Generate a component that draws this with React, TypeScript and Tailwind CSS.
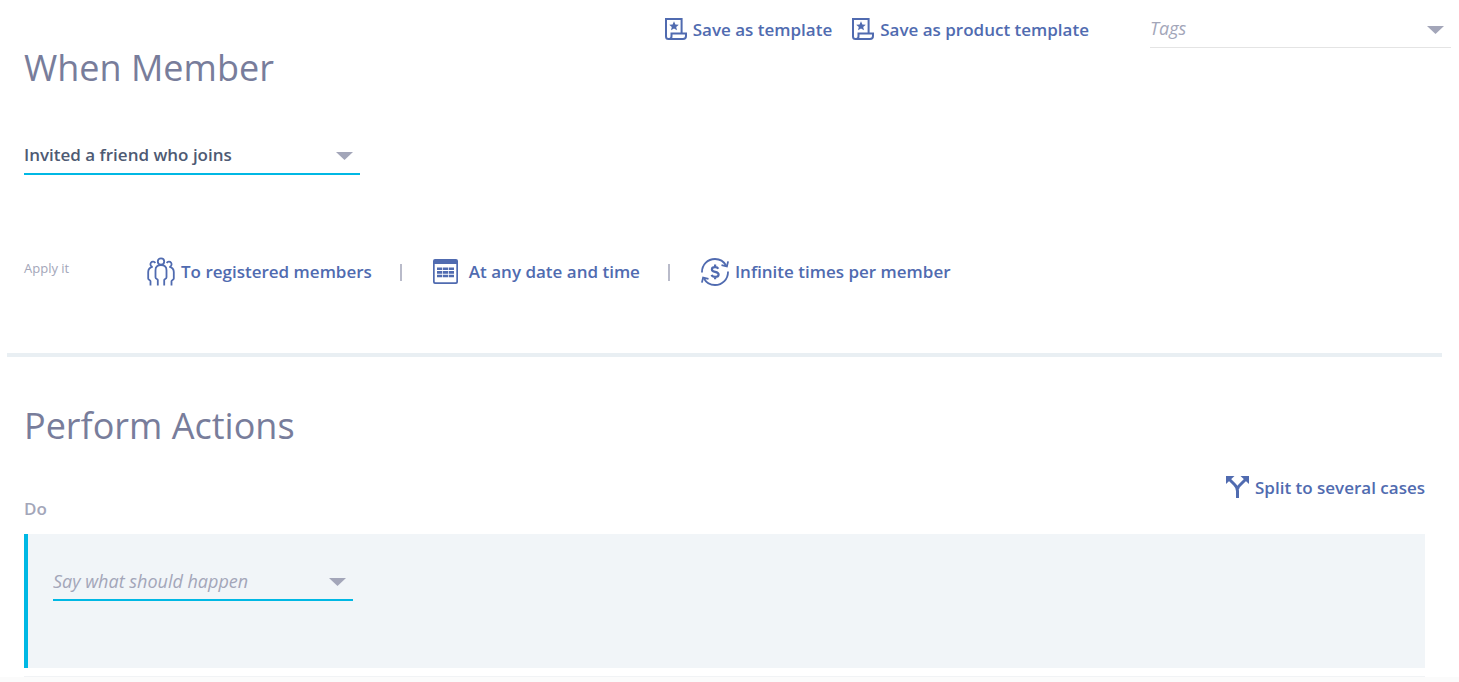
import type { ReactNode } from "react";

export default function App() {
  return (
    <div className="min-h-screen bg-white font-['Open_Sans','Noto_Sans',sans-serif] text-[17px] text-[#4e5a73]">
      <header className="flex h-12 items-start justify-end pr-2">
        <div className="flex gap-5 pt-[15px]">
          <ActionButton icon={<TemplateIcon />} label="Save as template" />
          <ActionButton icon={<TemplateIcon />} label="Save as product template" />
        </div>
        <Dropdown
          label="Tags"
          options={["Tags"]}
          className="ml-[61px] h-12 w-[301px]"
          selectClassName="border-b border-[#e4e4e4] pt-2 pb-0 text-lg italic text-[#a3a6b9]"
          arrowClassName="top-[26px]"
        />
      </header>

      <main>
        <section className="pl-6 pr-[34px]">
          <h1 className="text-4xl leading-10 text-[#787d9b]">When Member</h1>
          <Dropdown
            label="Trigger"
            options={["Invited a friend who joins"]}
            className="mt-[47px] h-10 w-[336px]"
            selectClassName="border-b-2 border-[#00b8e4] pt-px font-semibold text-[#4e5a73]"
            arrowClassName="top-[17px]"
          />

          <div className="mt-[82px] flex h-[30px] items-center">
            <span className="w-[123px] pb-[6px] text-[13px] text-[#a3a6b9]">Apply it</span>
            <ActionButton icon={<MembersIcon />} label="To registered members" />
            <Separator />
            <ActionButton icon={<CalendarIcon />} label="At any date and time" gap="gap-[11px]" />
            <Separator />
            <ActionButton icon={<RepeatIcon />} label="Infinite times per member" />
          </div>
        </section>

        <hr className="ml-[7px] mr-[17px] mt-[66px] border-t-4 border-[#e9eff3]" />

        <section className="mt-[49px] pl-6 pr-[34px]">
          <h2 className="text-4xl leading-10 text-[#787d9b]">Perform Actions</h2>
          <div className="mt-[27px] flex items-start justify-between">
            <h3 className="pt-6 font-semibold leading-6 text-[#a3a6b9]">Do</h3>
            <ActionButton icon={<SplitIcon />} label="Split to several cases" />
          </div>
          <div className="mt-[13px] border-l-4 border-[#00b8e4] bg-[#f1f5f8] pb-[67px] pl-[25px] pt-[27px]">
            <Dropdown
              label="Action"
              options={["Say what should happen"]}
              className="h-10 w-[300px]"
              selectClassName="border-b-2 border-[#00b8e4] pt-px text-lg italic text-[#a3a6b9]"
              arrowClassName="top-[17px]"
            />
          </div>
          <div className="mt-2 border-t border-[#f1f3f5]" />
        </section>
      </main>
      <footer className="h-[5px] bg-[#fbfbfb]" />
    </div>
  );
}

function ActionButton({ icon, label, gap = "gap-[6px]" }: { icon: ReactNode; label: string; gap?: string }) {
  return (
    <button type="button" className={`flex items-center whitespace-nowrap font-semibold leading-[30px] text-[#506bb0] ${gap}`}>
      {icon}
      {label}
    </button>
  );
}

function Separator() {
  return <span className="ml-7 mr-[31px] h-[17px] w-0.5 bg-[#b9bbca]" />;
}

function Dropdown({
  label,
  options,
  className,
  selectClassName,
  arrowClassName,
}: {
  label: string;
  options: string[];
  className: string;
  selectClassName: string;
  arrowClassName: string;
}) {
  return (
    <div className={`relative ${className}`}>
      <select
        aria-label={label}
        className={`h-full w-full appearance-none rounded-none bg-transparent outline-none ${selectClassName}`}
      >
        {options.map((o) => (
          <option key={o}>{o}</option>
        ))}
      </select>
      <svg
        className={`pointer-events-none absolute right-[7px] h-2 w-[17px] ${arrowClassName}`}
        viewBox="0 0 17 8"
        fill="#a3a6b9"
      >
        <path d="M0 0h17L8.500 8z" />
      </svg>
    </div>
  );
}

function TemplateIcon() {
  return (
    <svg className="h-6 w-[22px]" viewBox="0 0 22 24" fill="none" stroke="currentColor" strokeWidth="2">
      <path d="M16.600 15V1H1v17.500C1 20 2 21 3.500 21H18c2 0 3-1.500 3-3v-2.500H6.500v2.700c0 1.600-1 2.800-2.300 2.800" />
      <path d="M9 3.300l1.400 3.100 3.400.3-2.600 2.200.8 3.300L9 10.500 6 12.200l.8-3.300-2.600-2.200 3.400-.3z" fill="currentColor" stroke="none" />
    </svg>
  );
}

function MembersIcon() {
  return (
    <svg className="h-[30px] w-7" viewBox="0 0 28 30" fill="none" stroke="currentColor" strokeWidth="1.800">
      <circle cx="14" cy="4.500" r="3.200" />
      <path d="M10.800 28.500v-5.500c0-1.200-2.300-1-2.300-2.800v-7c0-3.200 2-5 5.500-5s5.500 1.800 5.500 5v7c0 1.800-2.300 1.600-2.300 2.800v5.500" />
      <path d="M8.300 6A2.600 2.600 0 1 0 5.600 9.800C2.500 10.500 1.200 12.200 1.200 15v6.500c0 1.600 2.300 1.500 2.300 2.800v4.200M19.700 6a2.600 2.600 0 1 1 2.700 3.800C25.500 10.500 26.800 12.200 26.800 15v6.500c0 1.600-2.300 1.500-2.300 2.800v4.200" />
    </svg>
  );
}

function CalendarIcon() {
  return (
    <svg className="h-[26px] w-[25px]" viewBox="0 0 25 26" fill="currentColor">
      <path
        fillRule="evenodd"
        d="M2 0h21a2 2 0 0 1 2 2v21a2 2 0 0 1-2 2H2a2 2 0 0 1-2-2V2a2 2 0 0 1 2-2zM1.700 5V22.500c0 .5.300.800.800.800h20c.5 0 .8-.3.800-.8V5z"
      />
      <path d="M4 8.500h5.300v2.600H4zM10 8.500h5.300v2.600H10zM16 8.500h5v2.600h-5zM4 12.100h5.300v2.600H4zM10 12.100h5.300v2.600H10zM16 12.100h5v2.600h-5zM4 15.700h5.300v2.600H4zM10 15.700h5.300v2.600H10zM16 15.700h5v2.600h-5z" />
    </svg>
  );
}

function RepeatIcon() {
  return (
    <svg className="h-7 w-7" viewBox="0 0 28 28" fill="none" stroke="currentColor" strokeWidth="1.800">
      <path d="M1 14.500C.8 7 6.500 1 14 1c4.800 0 8.800 2.300 11 6.500M27 13.500C27.200 21 21.500 27 14 27c-4.800 0-8.800-2.300-11-6.500" />
      <path d="M20.500 7.200l5.400 1.200 1.200-5M7.500 20.800l-5.400-1.200-1.200 5" />
      <path d="M17.300 10.800c-.5-1-1.700-1.600-3.200-1.600-1.900 0-3.200.9-3.200 2.200 0 3.300 6.700 1.700 6.700 5 0 1.500-1.400 2.400-3.400 2.400-1.800 0-3.100-.6-3.600-1.900M14.100 6.600v2.600M14.100 18.700v2.600" strokeWidth="2.200" />
    </svg>
  );
}

function SplitIcon() {
  return (
    <svg className="h-6 w-[23px]" viewBox="0 0 23 24" fill="none" stroke="currentColor" strokeWidth="3">
      <path d="M3.500 3.500L8.500 8.500c2 2 3 3.500 3 6.500v7M19.500 3.500L13.500 9.500c-1 1-1.500 2-1.800 3" />
      <path d="M0 0h8.500L0 8zM23 0h-8.500L23 8z" fill="currentColor" stroke="none" />
    </svg>
  );
}
